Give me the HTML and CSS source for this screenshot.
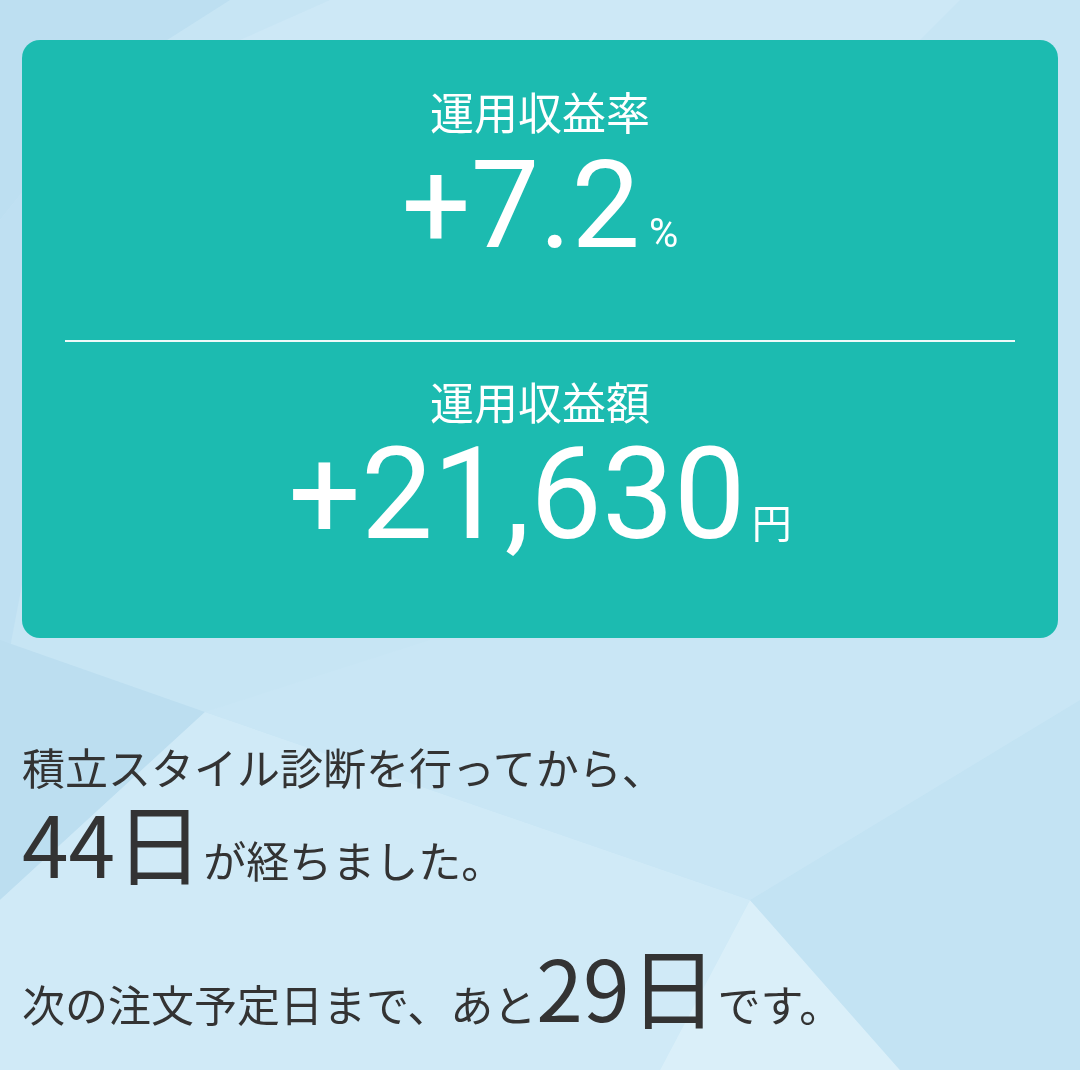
FILE: index.html
```html
<!DOCTYPE html>
<html lang="ja">
<head>
	<meta charset="UTF-8">
	<title>運用収益</title>
	<meta name="viewport" content="width=device-width, initial-scale=1">
	<link rel="stylesheet" href="styles.css">
</head>
<body>
	<svg class="backdrop" viewBox="0 0 1080 1070" preserveAspectRatio="none" aria-hidden="true">
		<rect width="1080" height="1070" fill="#c7e5f4"/>
		<polygon points="0,0 230,0 120,70 0,220" fill="#bddff1"/>
		<polygon points="330,0 960,0 920,40 240,40" fill="#cde8f6"/>
		<polygon points="0,220 120,70 0,700" fill="#bfe0f2"/>
		<polygon points="0,640 205,712 0,900" fill="#bcdef0"/>
		<polygon points="205,712 750,900 660,1070 0,1070 0,900" fill="#d0eaf7"/>
		<polygon points="750,900 900,1070 660,1070" fill="#daeff9"/>
		<polygon points="750,900 1080,700 1080,1070 900,1070" fill="#c3e3f3"/>
		<polygon points="205,712 430,640 1080,640 1080,700 750,900" fill="#c9e6f5"/>
	</svg>

	<main class="page">
		<section class="card">
			<div class="stat stat-rate">
				<div class="stat-label">運用収益率</div>
				<div class="stat-value">+7.2<span class="unit unit-pct">%</span></div>
			</div>
			<hr class="divider">
			<div class="stat stat-amount">
				<div class="stat-label">運用収益額</div>
				<div class="stat-value">+21,630<span class="unit unit-yen">円</span></div>
			</div>
		</section>

		<section class="notes">
			<div class="row row-first">積立スタイル診断を行ってから、</div>
			<div class="row row-days"><span class="num">44</span><span class="day">日</span><span class="tail">が経ちました。</span></div>
			<div class="row row-next">次の注文予定日まで、あと<span class="num">29</span><span class="day">日</span><span class="tail">です。</span></div>
		</section>
	</main>
</body>
</html>
```

FILE: styles.css
```css
* {
	box-sizing: border-box;
}

html, body {
	height: 100%;
}

body {
	margin: 0;
	font-family: Roboto, "Noto Sans CJK JP", sans-serif;
	color: #333;
	background-color: #c7e5f4;
	overflow: hidden;
}

.backdrop {
	position: fixed;
	top: 0;
	left: 0;
	width: 100%;
	height: 100%;
	z-index: -1;
}

.page {
	padding: 40px 22px 0;
}

.card {
	height: 598px;
	padding: 0 43px;
	border-radius: 18px;
	background-color: #1cbbb0;
	color: #fff;
	text-align: center;
}

.stat-label {
	font-family: "Noto Sans CJK JP", sans-serif;
	font-size: 44px;
	line-height: 50px;
}

.stat-value {
	line-height: 1;
}

.stat-rate {
	padding-top: 46px;
}

.stat-rate .stat-value {
	margin-top: 9px;
	font-size: 122px;
}

.stat-amount {
	padding-top: 34px;
}

.stat-amount .stat-value {
	margin-top: 4px;
	font-size: 128px;
}

.unit {
	font-family: "Noto Sans CJK JP", sans-serif;
}

.unit-pct {
	margin-left: 9px;
	font-family: Roboto, sans-serif;
	font-size: 40px;
}

.unit-yen {
	margin-left: 6px;
	font-size: 40px;
}

.divider {
	margin: 73px 0 0;
	height: 2px;
	border: 0;
	background-color: rgba(255, 255, 255, 0.92);
}

.notes {
	padding-top: 103px;
	font-family: "Noto Sans CJK JP", sans-serif;
	font-size: 43px;
	color: #333;
}

.row {
	display: flex;
	align-items: baseline;
	line-height: 1.2;
}

.num {
	font-size: 84px;
	line-height: 1;
}

.day {
	font-size: 88px;
	line-height: 1;
}

.row-days {
	margin-top: 3px;
}

.row-next {
	margin-top: 55px;
}
```
